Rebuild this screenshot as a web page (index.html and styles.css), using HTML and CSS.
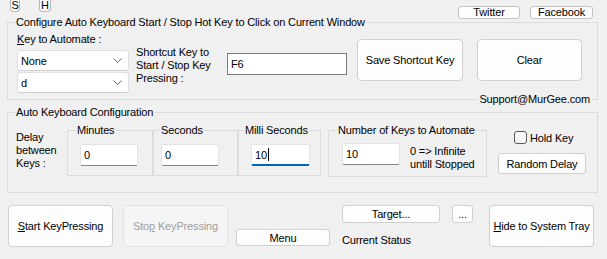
FILE: index.html
```html
<!DOCTYPE html>
<html>
<head>
<meta charset="utf-8">
<link rel="stylesheet" href="styles.css">
</head>
<body>
<div class="topbar">
  <div class="tiny tiny-s">S</div>
  <div class="tiny tiny-h">H</div>
  <button class="btn social tw">Twitter</button>
  <button class="btn social fb">Facebook</button>
</div>

<fieldset class="group g1">
  <legend>Configure Auto Keyboard Start / Stop Hot Key to Click on Current Window</legend>
  <div class="body">
    <div class="keycol">
      <div class="keylabel"><u>K</u>ey to Automate :</div>
      <div class="combo combo1"><span>None</span><svg class="chev" width="9" height="5" viewBox="0 0 9 5"><path d="M0.5 0.5 L4.5 4.5 L8.5 0.5" fill="none" stroke="#6a6a6a" stroke-width="1"/></svg></div>
      <div class="combo combo2"><span>d</span><svg class="chev" width="9" height="5" viewBox="0 0 9 5"><path d="M0.5 0.5 L4.5 4.5 L8.5 0.5" fill="none" stroke="#6a6a6a" stroke-width="1"/></svg></div>
    </div>
    <div class="shortlabel">Shortcut Key to<br>Start / Stop Key<br>Pressing :</div>
    <div class="input f6">F6</div>
    <button class="btn big save">Save Shortcut Key</button>
    <button class="btn big clear">Clear</button>
  </div>
  <div class="support">Support@MurGee.com</div>
</fieldset>

<fieldset class="group g2">
  <legend>Auto Keyboard Configuration</legend>
  <div class="body">
    <div class="delay">Delay<br>between<br>Keys :</div>
    <fieldset class="sub minutes">
      <legend>Minutes</legend>
      <div class="input small">0</div>
    </fieldset>
    <fieldset class="sub seconds">
      <legend>Seconds</legend>
      <div class="input small">0</div>
    </fieldset>
    <fieldset class="sub milli">
      <legend>Milli Seconds</legend>
      <div class="input small focus">10<span class="caret"></span></div>
    </fieldset>
    <fieldset class="sub numkeys">
      <legend>Number of Keys to Automate</legend>
      <div class="numrow">
        <div class="input small num">10</div>
        <div class="infinite">0 =&gt; Infinite<br>untill Stopped</div>
      </div>
    </fieldset>
    <div class="rcol">
      <div class="hold"><span class="check"></span><span>Hold Key</span></div>
      <button class="btn random">Random Delay</button>
    </div>
  </div>
</fieldset>

<div class="bottom">
  <button class="btn big start"><span><u>S</u>tart KeyPressing</span></button>
  <button class="btn big stop" disabled><span>Sto<u>p</u> KeyPressing</span></button>
  <button class="btn menu">Menu</button>
  <div class="targetcol">
    <button class="btn target">Target...</button>
    <div class="status">Current Status</div>
  </div>
  <button class="btn dots">...</button>
  <button class="btn big hide"><span><u>H</u>ide to System Tray</span></button>
</div>
</body>
</html>
```

FILE: styles.css
```css
* { box-sizing: border-box; }

html, body {
  margin: 0;
  width: 607px;
  height: 259px;
  overflow: hidden;
  background: #f0f0f0;
}

body {
  font-family: "Liberation Sans", Arial, sans-serif;
  font-size: 11px;
  letter-spacing: -0.15px;
  line-height: 14px;
  color: #000;
  white-space: nowrap;
}

u { text-decoration: underline; text-underline-offset: 1px; }

.btn {
  font: inherit;
  letter-spacing: inherit;
  color: #000;
  background: #fdfdfd;
  border: 1px solid #d0d0d0;
  border-radius: 4px;
  padding: 0;
  margin: 0;
  display: flex;
  align-items: center;
  justify-content: center;
  flex: none;
  white-space: nowrap;
}

/* top bar */
.topbar {
  display: flex;
  align-items: flex-start;
  height: 15px;
}
.tiny {
  height: 12px;
  background: #fdfdfd;
  border: 1px solid #b8b8b8;
  border-top: 0;
  border-radius: 0 0 4px 4px;
  font-size: 11px;
  line-height: 10px;
  text-align: center;
  flex: none;
}
.tiny-s { margin-left: 10px; width: 10px; }
.tiny-h { margin-left: 19px; width: 12px; }
.social {
  margin-top: 6px;
  height: 13px;
  line-height: 11px;
  border-radius: 3px;
  border-color: #c4c4c4;
}
.tw { margin-left: auto; width: 62px; }
.fb { margin-left: 10px; width: 63px; margin-right: 14px; }

/* group boxes */
fieldset {
  margin: 0;
  padding: 0;
  border: 1px solid #dcdcdc;
  min-width: 0;
}
legend {
  padding: 0 1px;
  margin-left: 7px;
  line-height: 14px;
}
.group {
  position: relative;
  margin-left: 7px;
  width: 591px;
}
.group .body {
  display: flex;
  align-items: flex-start;
}
.g1 .body { height: 70px; }
.g2 { margin-top: 5px; }
.g2 .body { height: 73px; }

/* group 1 */
.keycol { margin-left: 9px; width: 112px; flex: none; }
.keylabel { margin-top: 3px; line-height: 14px; }
.combo {
  height: 21px;
  background: #fff;
  border: 1px solid #e0e0e0;
  border-bottom-color: #cfcfcf;
  border-radius: 3px;
  display: flex;
  align-items: center;
  justify-content: space-between;
  padding: 0 6px 0 3px;
}
.combo1 { margin-top: 4px; }
.combo2 { margin-top: 1px; }
.chev { display: block; }

.shortlabel {
  margin-left: 7px;
  width: 91px;
  margin-top: 17px;
  line-height: 13px;
  flex: none;
}

.input {
  background: #fff;
  border: 1px solid #e3e3e3;
  border-bottom-color: #868686;
  border-radius: 2px;
  padding-left: 3px;
  display: flex;
  align-items: center;
  flex: none;
}
.f6 {
  margin-top: 24px;
  width: 120px;
  height: 22px;
  border: 1px solid #7a7a7a;
  border-radius: 0;
}
.big { height: 42px; }
.save { margin-top: 10px; margin-left: 10px; width: 106px; }
.clear { margin-top: 10px; margin-left: 14px; width: 105px; }

.support {
  position: absolute;
  right: 5px;
  bottom: -7px;
  padding: 0 2px;
  background: #f0f0f0;
  line-height: 14px;
}

/* group 2 */
.delay {
  margin-left: 8px;
  width: 51px;
  margin-top: 12px;
  line-height: 13px;
  flex: none;
}
.sub {
  margin-top: 4px;
  height: 53px;
  flex: none;
}
.minutes { width: 86px; }
.minutes legend { margin-left: 8px; }
.seconds { width: 85px; }
.seconds legend { margin-left: 6px; }
.milli { width: 83px; }
.milli legend { margin-left: 5px; }
.small {
  margin-top: 7px;
  width: 58px;
  height: 22px;
}
.minutes .small { margin-left: 12px; }
.seconds .small { margin-left: 7px; }
.milli .small {
  margin-left: 12px;
  width: 59px;
  border-bottom: 2px solid #0067c0;
}
.caret {
  display: inline-block;
  width: 1px;
  height: 13px;
  background: #000;
  margin-left: 1px;
}

.numkeys {
  margin-left: 7px;
  width: 159px;
  height: 54px;
}
.numkeys legend { margin-left: 8px; }
.numrow { display: flex; align-items: flex-start; }
.num { margin-top: 6px; margin-left: 13px; }
.infinite {
  margin-left: 10px;
  margin-top: 8px;
  line-height: 13px;
}

.rcol {
  margin-left: 11px;
  margin-top: 12px;
  flex: none;
}
.hold {
  display: flex;
  align-items: center;
  height: 13px;
  margin-left: 16px;
}
.check {
  width: 13px;
  height: 13px;
  background: #f7f7f7;
  border: 1px solid #5a5a5a;
  border-radius: 3px;
  margin-right: 3px;
  flex: none;
}
.random {
  margin-top: 9px;
  width: 88px;
  height: 21px;
  border-radius: 3px;
}

/* bottom row */
.bottom {
  display: flex;
  align-items: flex-start;
  margin-top: 12px;
  padding-left: 8px;
}
.start { width: 105px; }
.stop {
  margin-left: 10px;
  width: 105px;
  color: #a0a0a0;
  background: #f5f5f5;
  border-color: #e2e2e2;
}
.menu {
  margin-left: 8px;
  margin-top: 24px;
  width: 94px;
  height: 17px;
  border-radius: 3px;
}
.targetcol { margin-left: 12px; flex: none; }
.target {
  width: 98px;
  height: 18px;
  border-radius: 3px;
}
.status { margin-top: 10px; line-height: 14px; }
.dots {
  margin-left: 12px;
  width: 21px;
  height: 18px;
  border-radius: 3px;
}
.hide { margin-left: 16px; width: 105px; }
```
